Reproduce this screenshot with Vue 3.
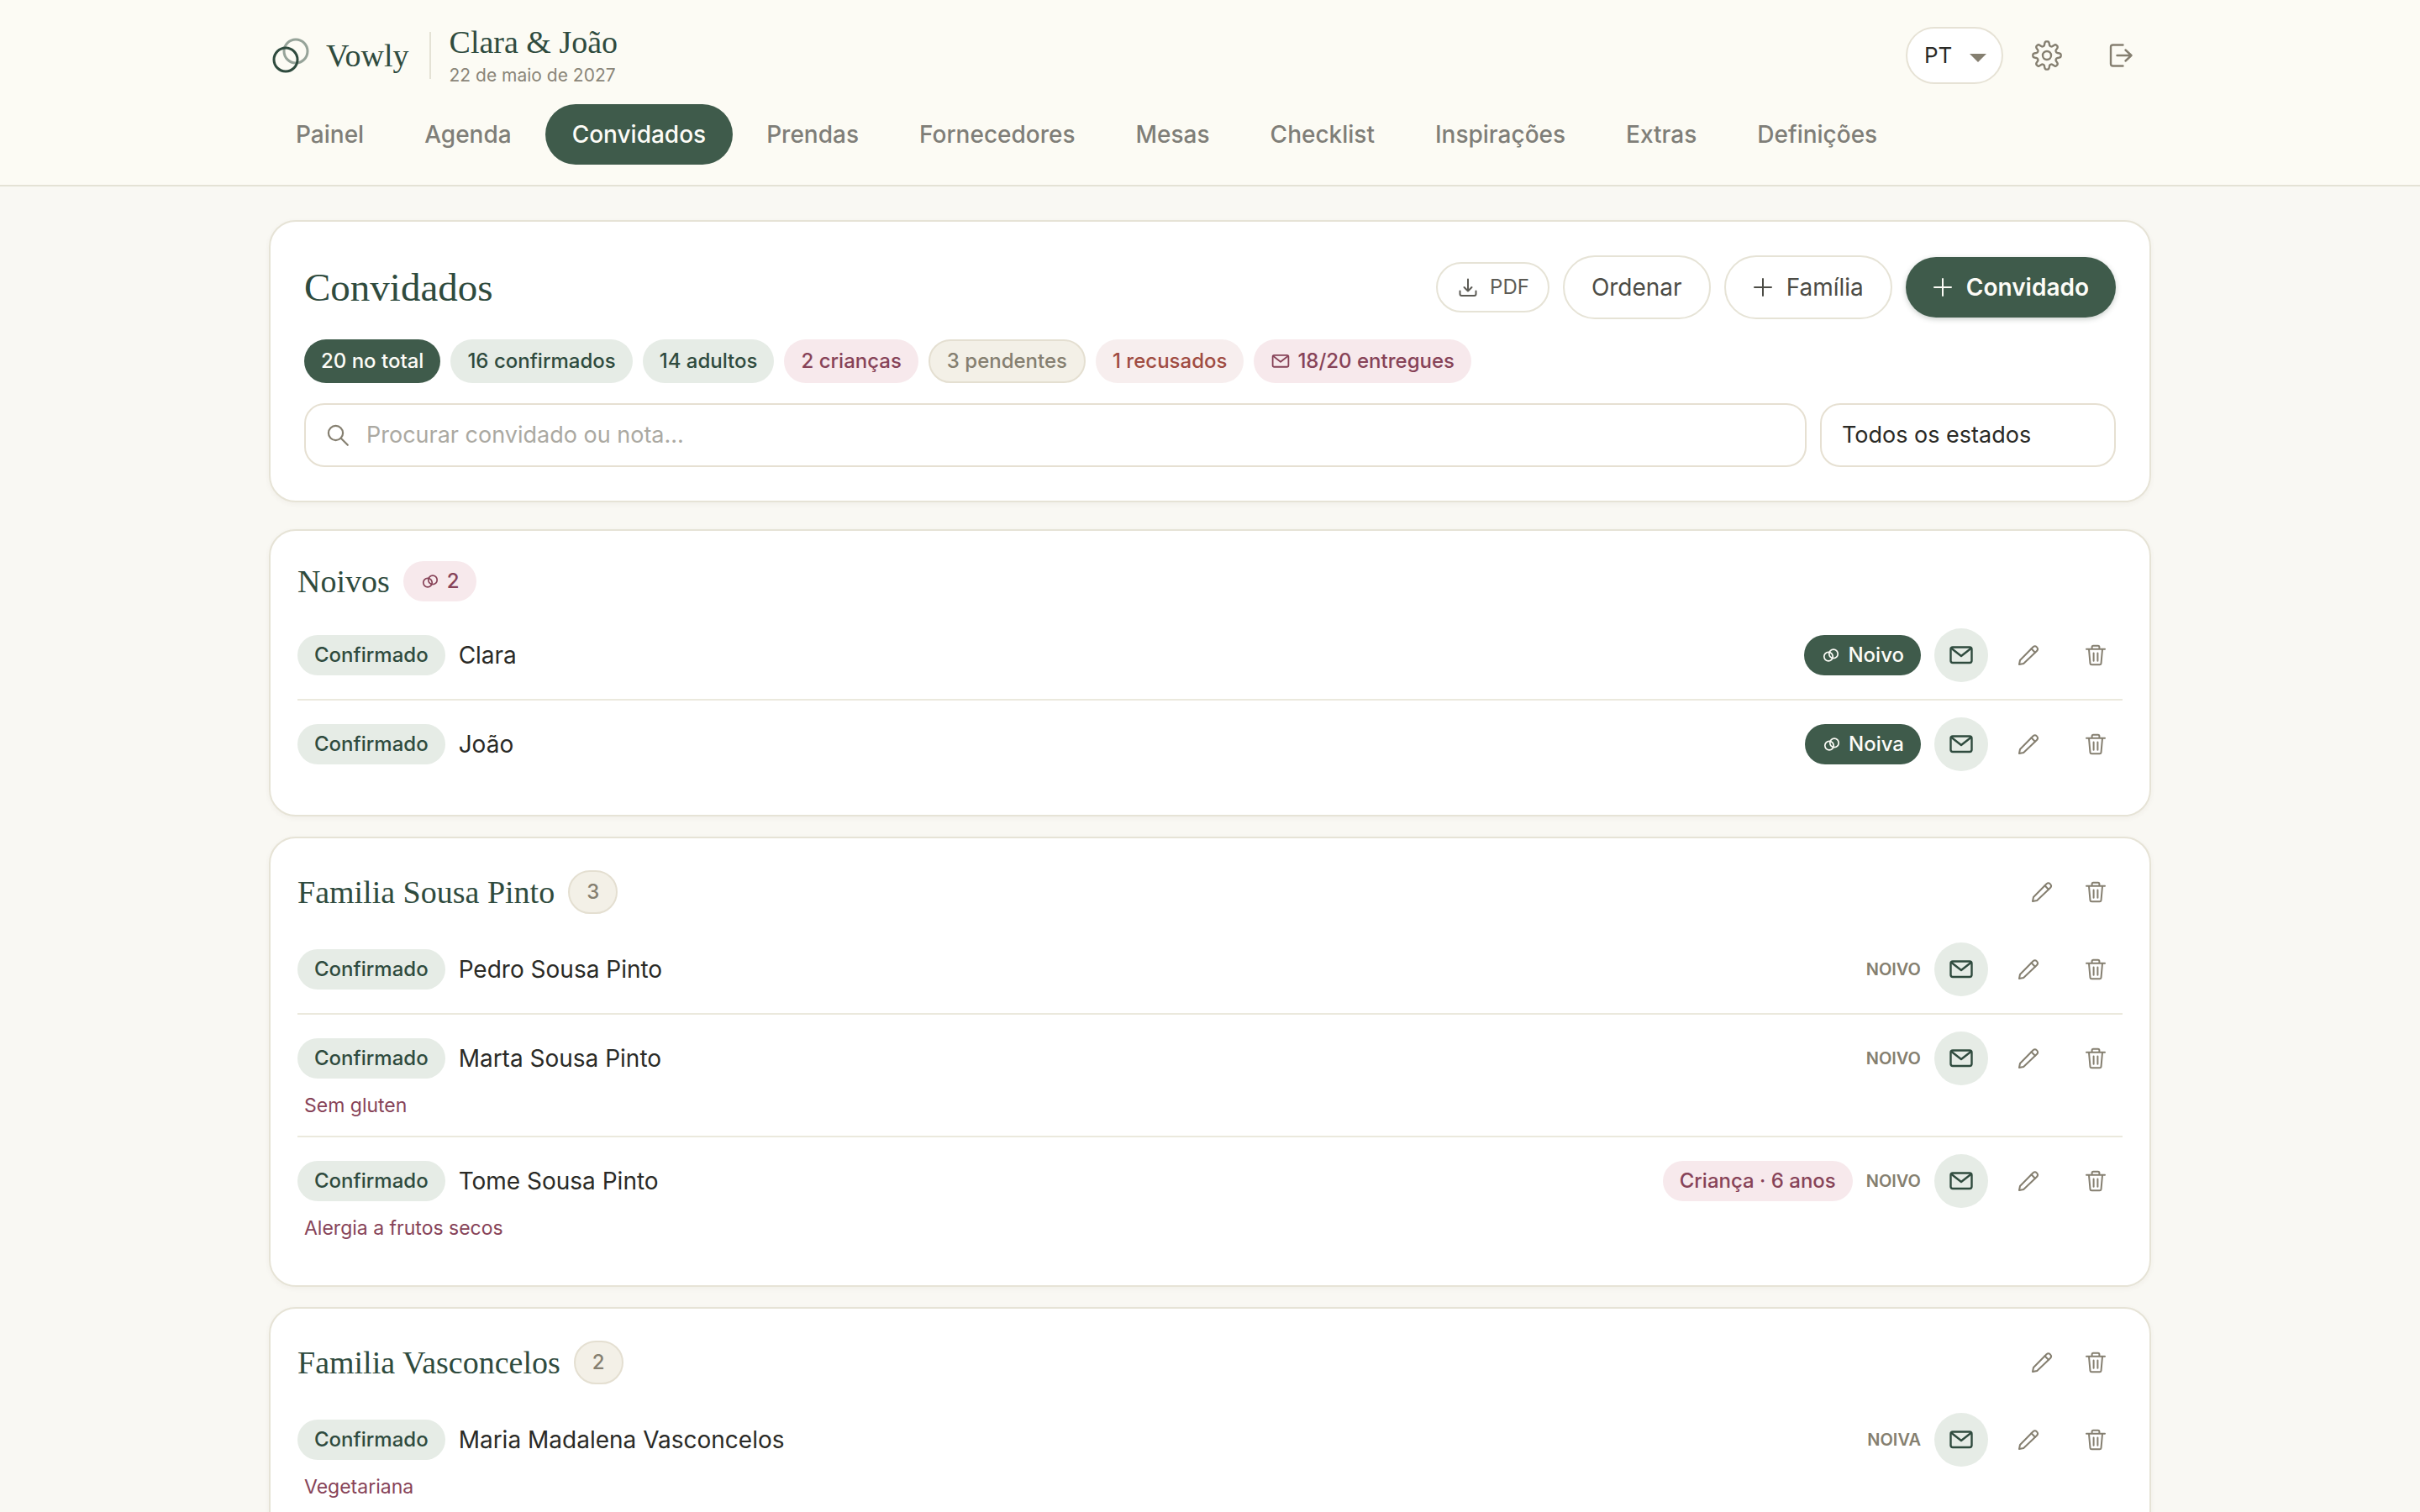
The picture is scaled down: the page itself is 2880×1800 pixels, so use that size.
<script setup>
import { h } from 'vue'

const shapes = {
  rings: { box: '0 0 24 24', width: 1.7, parts: [
    ['circle', { cx: 9, cy: 13.6, r: 5.2 }],
    ['circle', { cx: 15, cy: 10.4, r: 5.2 }]
  ] },
  mail: { box: '0 0 32 28', width: 2.4, parts: [
    ['rect', { x: 3.5, y: 4.5, width: 25, height: 18.5, rx: 2.5 }],
    ['path', { d: 'M4.500 6l11.500 9L27.500 6' }]
  ] },
  pencil: { box: '0 0 28 28', width: 2, parts: [
    ['path', { d: 'M3 25l1-5L19.5 4.2a3.3 3.3 0 0 1 4.7 4.6L8.2 24z' }],
    ['path', { d: 'M17.5 6.3l4.4 4.4' }]
  ] },
  trash: { box: '0 0 28 28', width: 2, parts: [
    ['path', { d: 'M3 6.8h22M9.6 6.5V4.2q0-1.5 1.5-1.5h5.8q1.5 0 1.5 1.5v2.3' }],
    ['path', { d: 'M6 7l1.5 16.8q.2 1.5 1.7 1.5h9.6q1.5 0 1.7-1.5L22 7M11.6 11.5v9.2M16.4 11.5v9.2' }]
  ] },
  download: { box: '0 0 28 28', width: 2, parts: [
    ['path', { d: 'M14 4.5v14M9.5 14l4.5 4.5 4.5-4.5' }],
    ['path', { d: 'M4.5 18.5V22q0 2 2 2h15q2 0 2-2v-3.5' }]
  ] },
  plus: { box: '0 0 24 24', width: 2, parts: [['path', { d: 'M12 2v20M2 12h20' }]] },
  search: { box: '0 0 28 28', width: 2.2, parts: [
    ['circle', { cx: 11.5, cy: 11.5, r: 8.6 }],
    ['path', { d: 'M17.8 17.8l8 8' }]
  ] },
  gear: { box: '0 0 36 36', width: 2.4, parts: [
    ['path', { d: gearOutline() }],
    ['circle', { cx: 18, cy: 18, r: 5 }]
  ] },
  logout: { box: '0 0 32 32', width: 2.4, parts: [
    ['path', { d: 'M18.5 3.5H6.5q-2.5 0-2.5 2.5v20q0 2.500 2.500 2.500h12' }],
    ['path', { d: 'M11.500 16h17M21.500 9.500l7 6.500-7 6.500' }]
  ] }
}

function gearOutline() {
  const steps = 160
  const points = []
  for (let i = 0; i < steps; i++) {
    const angle = (i / steps) * Math.PI * 2
    const radius = 14.2 + 2.6 * Math.tanh(1.8 * Math.cos(8 * angle))
    points.push(`${(18 + radius * Math.cos(angle)).toFixed(2)} ${(18 + radius * Math.sin(angle)).toFixed(2)}`)
  }
  return `M${points.join('L')}Z`
}

const Icon = (props) => {
  const shape = shapes[props.name]
  return h('svg', {
    viewBox: shape.box, fill: 'none', stroke: 'currentColor', 'stroke-width': shape.width,
    'stroke-linecap': 'round', 'stroke-linejoin': 'round', 'aria-hidden': 'true'
  }, shape.parts.map(([tag, attrs]) => h(tag, attrs)))
}
Icon.props = ['name']

const tabs = ['Painel', 'Agenda', 'Convidados', 'Prendas', 'Fornecedores', 'Mesas', 'Checklist', 'Inspirações', 'Extras', 'Definições']

const stats = [
  { text: '20 no total', tone: 'solid' },
  { text: '16 confirmados', tone: 'green' },
  { text: '14 adultos', tone: 'green' },
  { text: '2 crianças', tone: 'pink' },
  { text: '3 pendentes', tone: 'neutral' },
  { text: '1 recusados', tone: 'red' },
  { text: '18/20 entregues', tone: 'pink', icon: 'mail' }
]

const groups = [
  { name: 'Noivos', couple: true, count: 2, guests: [
    { name: 'Clara', role: 'Noivo' },
    { name: 'João', role: 'Noiva' }
  ] },
  { name: 'Familia Sousa Pinto', count: 3, guests: [
    { name: 'Pedro Sousa Pinto', side: 'NOIVO' },
    { name: 'Marta Sousa Pinto', side: 'NOIVO', note: 'Sem gluten' },
    { name: 'Tome Sousa Pinto', side: 'NOIVO', child: 'Criança · 6 anos', note: 'Alergia a frutos secos' }
  ] },
  { name: 'Familia Vasconcelos', count: 2, guests: [
    { name: 'Maria Madalena Vasconcelos', side: 'NOIVA', note: 'Vegetariana' }
  ] }
]
</script>

<template>
  <div class="page">
    <header class="header">
      <div class="container">
        <div class="topbar">
          <a class="brand" href="#">
            <svg class="logo" viewBox="0 0 52 52" fill="none" stroke="currentColor" stroke-width="3" aria-hidden="true">
              <circle cx="32" cy="21" r="14" opacity=".5" />
              <circle cx="20" cy="31" r="14" />
            </svg>
            <span class="brand-name">Vowly</span>
          </a>
          <div class="event">
            <span class="event-name">Clara &amp; João</span>
            <span class="event-date">22 de maio de 2027</span>
          </div>
          <div class="tools">
            <div class="language">
              <select aria-label="Idioma"><option>PT</option></select>
              <svg viewBox="0 0 20 10" aria-hidden="true"><path d="M0 0h20L10 10z" fill="currentColor" /></svg>
            </div>
            <button class="tool" type="button" aria-label="Configurações"><Icon name="gear" class="gear" /></button>
            <button class="tool" type="button" aria-label="Sair"><Icon name="logout" class="logout" /></button>
          </div>
        </div>
        <nav class="tabs">
          <a v-for="tab in tabs" :key="tab" href="#" :class="['tab', { active: tab === 'Convidados' }]">{{ tab }}</a>
        </nav>
      </div>
    </header>

    <main class="container main">
      <section class="card overview">
        <div class="overview-head">
          <h1>Convidados</h1>
          <div class="actions">
            <button type="button" class="btn small"><Icon name="download" class="i28" />PDF</button>
            <button type="button" class="btn">Ordenar</button>
            <button type="button" class="btn"><Icon name="plus" class="i24" />Família</button>
            <button type="button" class="btn primary"><Icon name="plus" class="i24" />Convidado</button>
          </div>
        </div>
        <div class="stats">
          <span v-for="stat in stats" :key="stat.text" :class="['chip', 'stat', stat.tone]">
            <Icon v-if="stat.icon" :name="stat.icon" class="i24" />{{ stat.text }}
          </span>
        </div>
        <div class="filters">
          <label class="search">
            <Icon name="search" class="i28" />
            <input type="search" placeholder="Procurar convidado ou nota..." aria-label="Procurar convidado ou nota" />
          </label>
          <select class="status" aria-label="Estado"><option>Todos os estados</option></select>
        </div>
      </section>

      <section v-for="group in groups" :key="group.name" class="card group">
        <div class="group-head">
          <h2>{{ group.name }}</h2>
          <span v-if="group.couple" class="chip pink"><Icon name="rings" class="i24" />{{ group.count }}</span>
          <span v-else class="chip stat neutral">{{ group.count }}</span>
          <div v-if="!group.couple" class="group-tools">
            <button type="button" class="icon-btn" aria-label="Editar família"><Icon name="pencil" class="i28" /></button>
            <button type="button" class="icon-btn" aria-label="Eliminar família"><Icon name="trash" class="i28" /></button>
          </div>
        </div>
        <ul class="guests">
          <li v-for="guest in group.guests" :key="guest.name" class="guest">
            <div class="guest-row">
              <span class="chip green">Confirmado</span>
              <span class="guest-name">{{ guest.name }}</span>
              <span v-if="guest.role" class="chip solid"><Icon name="rings" class="i24" />{{ guest.role }}</span>
              <span v-if="guest.child" class="chip pink">{{ guest.child }}</span>
              <span v-if="guest.side" class="side">{{ guest.side }}</span>
              <button type="button" class="icon-btn mail" aria-label="Convite entregue"><Icon name="mail" class="i32" /></button>
              <button type="button" class="icon-btn" aria-label="Editar convidado"><Icon name="pencil" class="i28" /></button>
              <button type="button" class="icon-btn" aria-label="Eliminar convidado"><Icon name="trash" class="i28" /></button>
            </div>
            <p v-if="guest.note" class="note">{{ guest.note }}</p>
          </li>
        </ul>
      </section>
    </main>
  </div>
</template>

<style>
body {
  background: #f9f8f3;
}
</style>

<style scoped>
.page {
  height: 100vh;
  overflow: hidden;
  color: #2a2a26;
  font-family: Inter, "Liberation Sans", sans-serif;
  font-size: 28px;
  line-height: 40px;
}

.page *,
.page *::before {
  box-sizing: border-box;
}

button,
select,
input {
  margin: 0;
  color: inherit;
  font: inherit;
}

button {
  cursor: pointer;
}

a {
  color: inherit;
  text-decoration: none;
}

svg {
  display: block;
  flex: none;
}

.i24 { width: 24px; height: 24px; }
.i28 { width: 28px; height: 28px; }
.i32 { width: 32px; height: 28px; }

.container {
  max-width: 2240px;
  margin: 0 auto;
}

.header {
  padding: 24px 0;
  background: #fcfbf4;
  border-bottom: 2px solid #e4e2d5;
}

.topbar {
  display: flex;
  align-items: center;
  height: 84px;
  margin-bottom: 16px;
}

.brand {
  display: flex;
  align-items: center;
  gap: 16px;
  color: #2f4b3e;
}

.logo {
  width: 52px;
  height: 52px;
}

.brand-name,
.event-name,
h1,
h2 {
  font-family: "Liberation Serif", serif;
  font-weight: 400;
  color: #2f4b3e;
}

.brand-name,
.event-name {
  font-size: 38px;
  line-height: 48px;
}

.event {
  display: flex;
  flex-direction: column;
  margin-left: 24px;
  padding-left: 24px;
  position: relative;
}

.event::before {
  content: "";
  position: absolute;
  left: 0;
  top: 12px;
  bottom: 12px;
  width: 2px;
  background: #e4e2d5;
}

.event-date {
  font-size: 21px;
  line-height: 32px;
  color: #8a8578;
}

.tools {
  display: flex;
  align-items: center;
  gap: 16px;
  margin-left: auto;
  color: #857f70;
}

.language {
  position: relative;
}

.language select {
  appearance: none;
  display: block;
  width: 116px;
  height: 68px;
  padding: 0 20px;
  border: 2px solid #e6e2d5;
  border-radius: 34px;
  background: #fff;
  color: #2a2a26;
  font-size: 26px;
}

.language svg {
  position: absolute;
  right: 20px;
  top: 32px;
  width: 20px;
  height: 10px;
  pointer-events: none;
}

.tool {
  display: grid;
  place-items: center;
  width: 72px;
  height: 72px;
  padding: 0;
  border: 0;
  border-radius: 50%;
  background: none;
}

.gear { width: 36px; height: 36px; }
.logout { width: 32px; height: 32px; }

.tabs {
  display: flex;
  gap: 8px;
}

.tab {
  padding: 16px 32px;
  border-radius: 36px;
  color: #7f7e78;
  font-weight: 500;
}

.tab.active {
  background: #3f5b4b;
  color: #fdfcf7;
}

.main {
  display: flex;
  flex-direction: column;
  gap: 24px;
  padding-top: 40px;
}

.card {
  border: 2px solid #e6e3d6;
  border-radius: 32px;
  background: #fff;
  box-shadow: 0 2px 6px rgba(70, 65, 40, 0.05);
}

.overview {
  display: flex;
  flex-direction: column;
  gap: 24px;
  margin-bottom: 8px;
  padding: 40px;
}

.overview-head,
.actions,
.stats,
.filters {
  display: flex;
  align-items: center;
}

.overview-head {
  justify-content: space-between;
}

h1,
h2 {
  margin: 0;
}

h1 {
  font-size: 47px;
  line-height: 56px;
}

h2 {
  font-size: 38px;
  line-height: 56px;
}

.actions {
  gap: 16px;
}

.btn {
  display: flex;
  align-items: center;
  gap: 16px;
  height: 76px;
  padding: 0 32px;
  border: 2px solid #e6e3d6;
  border-radius: 38px;
  background: #fff;
  color: #4c4c46;
}

.btn.small {
  gap: 12px;
  height: 60px;
  padding: 0 22px;
  color: #5c5b55;
  font-size: 24px;
}

.btn.primary {
  height: 72px;
  border: 0;
  background: #3f5b4b;
  color: #fdfcf7;
  font-weight: 600;
  box-shadow: 0 2px 6px rgba(40, 60, 48, 0.25);
}

.stats {
  gap: 12px;
}

.chip {
  display: inline-flex;
  align-items: center;
  gap: 8px;
  height: 48px;
  padding: 0 20px;
  border-radius: 26px;
  font-size: 24px;
  line-height: 32px;
  font-weight: 500;
  white-space: nowrap;
}

.chip.stat {
  height: 52px;
}

.solid { background: #3f5b4b; color: #fdfcf7; }
.green { background: #e6ece6; color: #2f4b3e; }
.pink { background: #f7e9ec; color: #874358; }
.red { background: #f7eeee; color: #a04c42; }
.neutral { background: #f3f0e7; color: #857f70; border: 2px solid #e4dfd1; }

.filters {
  gap: 16px;
}

.search {
  display: flex;
  flex: 1;
  align-items: center;
  gap: 20px;
  height: 76px;
  padding: 0 24px;
  border: 2px solid #e6e0d2;
  border-radius: 24px;
  color: #857f70;
}

.search input {
  flex: 1;
  min-width: 0;
  padding: 0;
  border: 0;
  outline: 0;
  background: none;
  color: #2a2a26;
  font-size: 27px;
}

.search input::placeholder {
  color: #aba9a2;
  opacity: 1;
}

.status {
  appearance: none;
  width: 352px;
  height: 76px;
  padding: 0 24px;
  border: 2px solid #e6e0d2;
  border-radius: 24px;
  background: #fff;
  font-size: 27px;
}

.group {
  padding: 32px;
}

.group-head {
  display: flex;
  align-items: center;
  gap: 16px;
  margin-bottom: 8px;
}

.group-tools {
  display: flex;
  margin-left: auto;
}

.icon-btn {
  display: grid;
  flex: none;
  place-items: center;
  width: 64px;
  height: 64px;
  padding: 0;
  border: 0;
  border-radius: 50%;
  background: none;
  color: #857f70;
}

.icon-btn.mail {
  background: #e6ece6;
  color: #2f4b3e;
}

.guests {
  margin: 0;
  padding: 0;
  list-style: none;
}

.guest {
  padding: 20px 0;
}

.guest + .guest {
  border-top: 2px solid #ebe9dd;
}

.guest-row {
  display: flex;
  align-items: center;
  gap: 16px;
}

.guest-name {
  flex: 1;
}

.side {
  color: #857f70;
  font-size: 20px;
  font-weight: 600;
}

.note {
  margin: 8px 0 0;
  padding-left: 8px;
  color: #874358;
  font-size: 23px;
  line-height: 32px;
}
</style>
